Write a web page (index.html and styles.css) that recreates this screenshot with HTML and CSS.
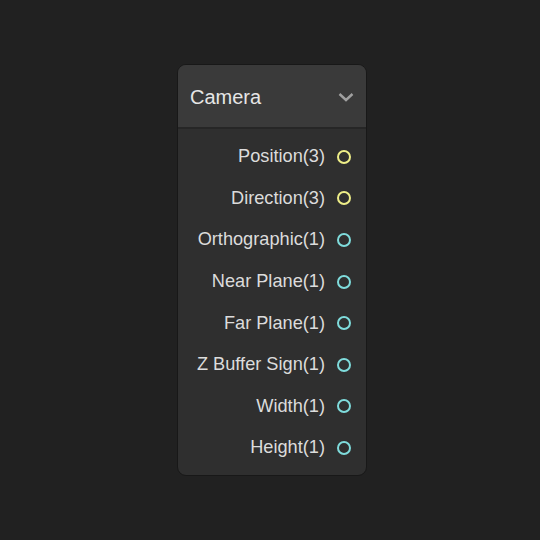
FILE: index.html
```html
<!DOCTYPE html>
<html>
<head>
<meta charset="utf-8">
<link rel="stylesheet" href="styles.css">
</head>
<body>
<div class="stage">
  <div class="node">
    <div class="node-header">
      <span class="node-title">Camera</span>
      <svg class="chevron" width="16" height="10" viewBox="0 0 16 10"><path d="M1.5 2 L8 8 L14.5 2" fill="none" stroke="#a0a0a0" stroke-width="2.4"/></svg>
    </div>
    <div class="node-body">
      <div class="port"><span class="label">Position(3)</span><span class="dot yellow"></span></div>
      <div class="port"><span class="label">Direction(3)</span><span class="dot yellow"></span></div>
      <div class="port"><span class="label">Orthographic(1)</span><span class="dot cyan"></span></div>
      <div class="port"><span class="label">Near Plane(1)</span><span class="dot cyan"></span></div>
      <div class="port"><span class="label">Far Plane(1)</span><span class="dot cyan"></span></div>
      <div class="port"><span class="label">Z Buffer Sign(1)</span><span class="dot cyan"></span></div>
      <div class="port"><span class="label">Width(1)</span><span class="dot cyan"></span></div>
      <div class="port"><span class="label">Height(1)</span><span class="dot cyan"></span></div>
    </div>
  </div>
</div>
</body>
</html>
```
FILE: styles.css
```css
html, body {
  margin: 0;
  padding: 0;
  background: #212121;
  font-family: "Liberation Sans", Arial, sans-serif;
}
.stage {
  width: 540px;
  height: 540px;
  display: flex;
  justify-content: center;
  padding-top: 64px;
  box-sizing: border-box;
}
.node {
  width: 190px;
  height: 412px;
  box-sizing: border-box;
  border: 1px solid #181818;
  border-radius: 9px;
  background: #2f2f2f;
  overflow: hidden;
  margin-left: 4px;
}
.node-header {
  height: 64px;
  box-sizing: border-box;
  background: #3a3a3a;
  border-bottom: 2px solid #262626;
  display: flex;
  align-items: center;
  justify-content: space-between;
  padding: 2px 12px 0 12px;
}
.node-title {
  color: #e6e6e6;
  font-size: 20px;
}
.chevron {
  display: block;
  margin-right: 0;
}
.node-body {
  padding-top: 7px;
  display: flex;
  flex-direction: column;
}
.port {
  height: 41.6px;
  display: flex;
  align-items: center;
  justify-content: flex-end;
  padding-right: 15px;
  gap: 12px;
}
.label {
  color: #dcdcdc;
  font-size: 18.2px;
}
.dot {
  width: 10px;
  height: 10px;
  border-radius: 50%;
  border: 2px solid;
  box-sizing: content-box;
}
.yellow { border-color: #eeee88; }
.cyan { border-color: #7fdcdc; }
```
